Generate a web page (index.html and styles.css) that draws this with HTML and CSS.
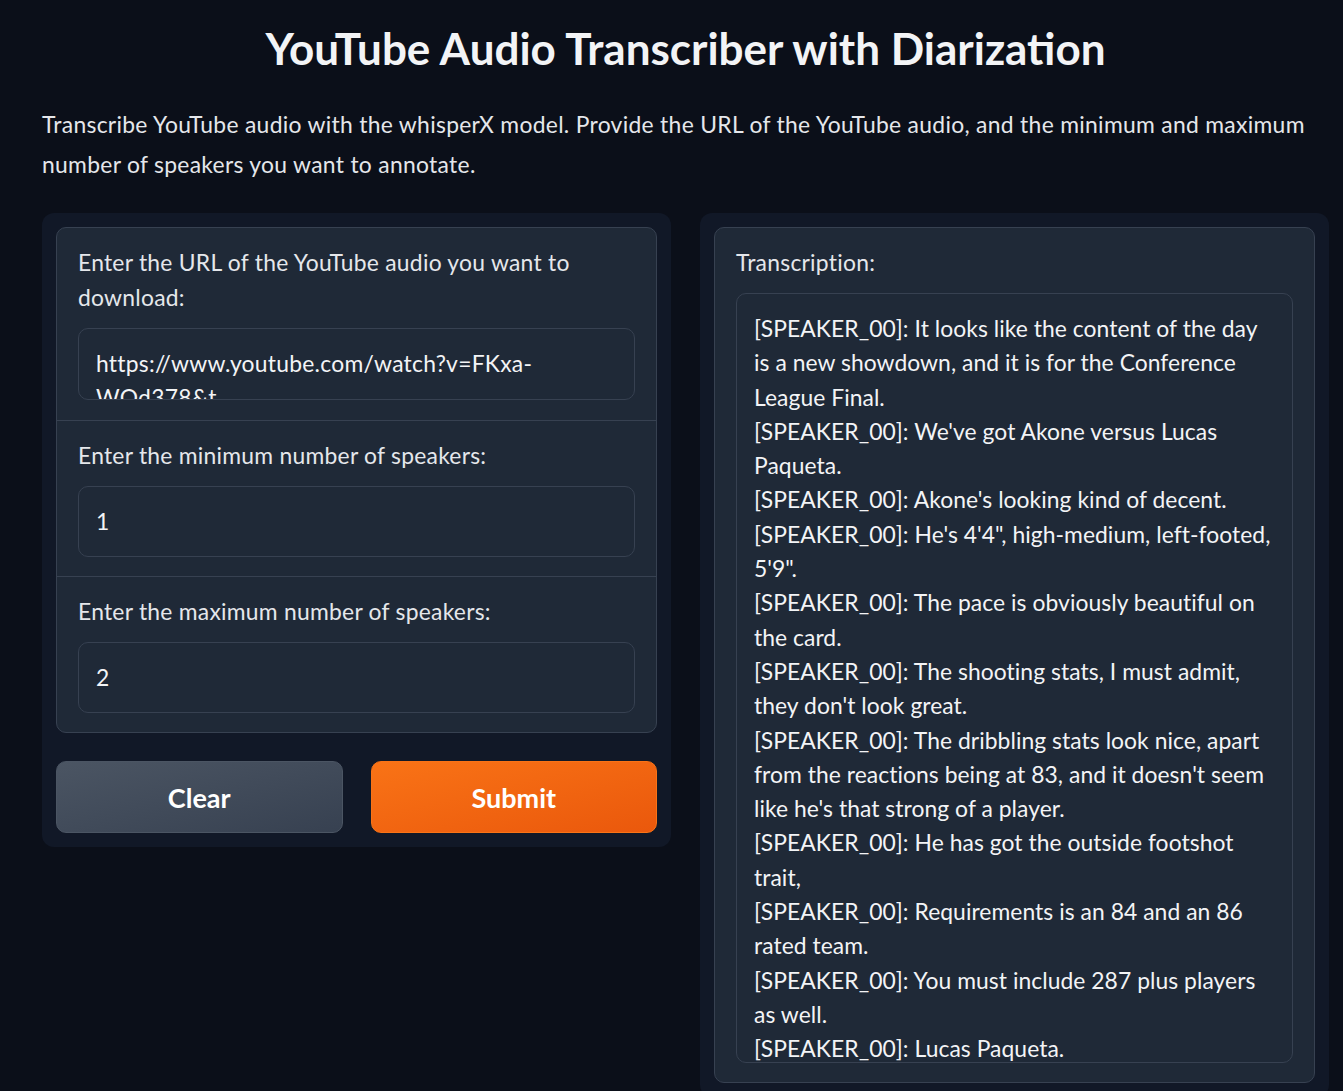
FILE: index.html
```html
<!DOCTYPE html>
<html lang="en">
<head>
<meta charset="utf-8">
<title>YouTube Audio Transcriber with Diarization</title>
<link rel="stylesheet" href="styles.css">
</head>
<body>
<div class="app">
  <h1 class="title">YouTube Audio Transcriber with Diarization</h1>
  <p class="desc">Transcribe YouTube audio with the whisperX model. Provide the URL of the YouTube audio, and the minimum and maximum number of speakers you want to annotate.</p>
  <div class="row">
    <div class="panel">
      <div class="block">
        <div class="field field-url">
          <label class="label">Enter the URL of the YouTube audio you want to download:</label>
          <div class="input url">https://www.youtube.com/watch?v=FKxa-WOd378&amp;t</div>
        </div>
        <div class="field">
          <label class="label">Enter the minimum number of speakers:</label>
          <div class="input">1</div>
        </div>
        <div class="field">
          <label class="label">Enter the maximum number of speakers:</label>
          <div class="input">2</div>
        </div>
      </div>
      <div class="buttons">
        <button class="btn btn-secondary">Clear</button>
        <button class="btn btn-primary">Submit</button>
      </div>
    </div>
    <div class="panel">
      <div class="block">
        <div class="field">
          <label class="label">Transcription:</label>
          <div class="input output">[SPEAKER_00]: It looks like the content of the day
is a new showdown, and it is for the Conference
League Final.
[SPEAKER_00]: We've got Akone versus Lucas
Paqueta.
[SPEAKER_00]: Akone's looking kind of decent.
[SPEAKER_00]: He's 4'4", high-medium, left-footed,
5'9".
[SPEAKER_00]: The pace is obviously beautiful on
the card.
[SPEAKER_00]: The shooting stats, I must admit,
they don't look great.
[SPEAKER_00]: The dribbling stats look nice, apart
from the reactions being at 83, and it doesn't seem
like he's that strong of a player.
[SPEAKER_00]: He has got the outside footshot
trait,
[SPEAKER_00]: Requirements is an 84 and an 86
rated team.
[SPEAKER_00]: You must include 287 plus players
as well.
[SPEAKER_00]: Lucas Paqueta.
[SPEAKER_00]: He's coming in at an 86 rated card.</div>
        </div>
      </div>
    </div>
  </div>
</div>
</body>
</html>
```

FILE: styles.css
```css
* { box-sizing: border-box; }

html, body {
  margin: 0;
  background: #0b0f19;
  height: 100%;
  overflow: hidden;
}

body {
  font-family: "Source Sans Pro", Lato, "Noto Sans", sans-serif;
  color: #e5e7eb;
}

.app {
  padding: 0 14px 0 42px;
}

.title {
  margin: 22px 0 0;
  font-size: 44px;
  line-height: 52px;
  font-weight: 700;
  text-align: center;
  color: #f3f4f6;
}

.desc {
  margin: 30px 0 0;
  font-size: 22.86px;
  line-height: 40px;
  letter-spacing: 0.3px;
  color: #e5e7eb;
}

.row {
  margin-top: 29px;
  display: grid;
  grid-template-columns: 629px 629px;
  gap: 29px;
  align-items: start;
}

.panel {
  background: #111827;
  border-radius: 12px;
  padding: 14px;
}

.block {
  background: #1f2937;
  border: 1px solid #374151;
  border-radius: 10px;
  overflow: hidden;
}

.field {
  padding: 17px 21px 19px;
  border-top: 1px solid #374151;
}
.field:first-child { border-top: none; }
.field-url { padding-bottom: 20px; }

.label {
  display: block;
  font-size: 22.86px;
  line-height: 35px;
  letter-spacing: 0.25px;
  color: #e5e7eb;
  margin-bottom: 13px;
}

.input {
  background: #1f2937;
  border: 1px solid #374151;
  border-radius: 10px;
  padding: 17px 17px;
  font-size: 22.86px;
  line-height: 34.3px;
  letter-spacing: 0.25px;
  color: #f3f4f6;
  height: 71px;
  overflow: hidden;
}

.input.url {
  height: 72px;
}

.input.output {
  margin-top: 1px;
  height: 770px;
  white-space: pre;
  letter-spacing: 0.05px;
}

.buttons {
  margin-top: 28px;
  display: flex;
  gap: 28px;
}

.btn {
  flex: 1;
  height: 72px;
  border-radius: 10px;
  font-family: inherit;
  font-size: 27px;
  font-weight: 700;
  color: #ffffff;
  cursor: pointer;
}

.btn-secondary {
  background: linear-gradient(to bottom right, #4b5563, #374151);
  border: 1px solid #4b5563;
}

.btn-primary {
  background: linear-gradient(to bottom right, #f97316, #ea580c);
  border: 1px solid #f97316;
}
```
